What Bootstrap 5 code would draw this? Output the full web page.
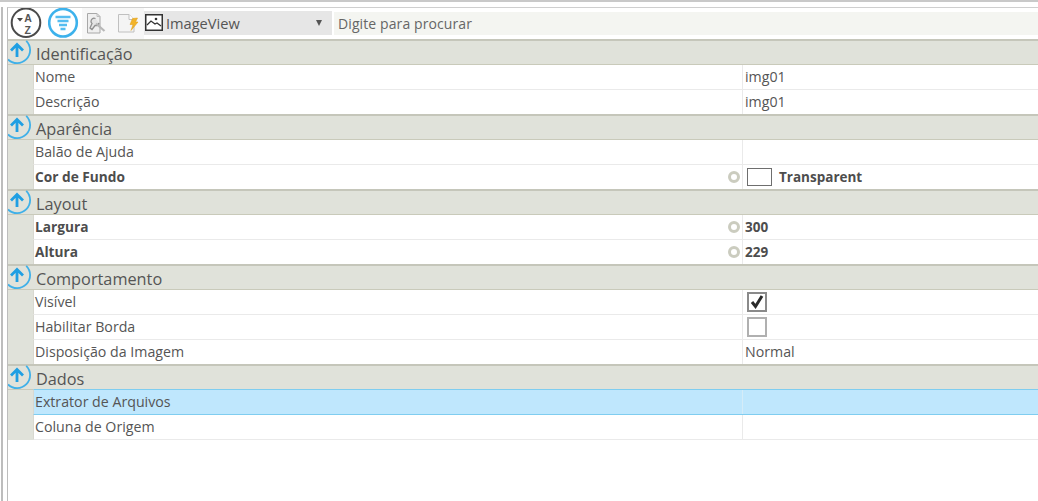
<!DOCTYPE html>
<html lang="pt">
<head>
<meta charset="utf-8">
<title>Propriedades</title>
<link href="https://cdn.jsdelivr.net/npm/bootstrap@5.3.0/dist/css/bootstrap.min.css" rel="stylesheet">
<style>
html,body{height:501px;overflow:hidden;background:#fff}
body{font-family:"Open Sans","Noto Sans",sans-serif;font-size:14.2px;color:#555}
.outer-frame{height:501px;padding-left:1px;border-top:2px solid #c9c9c9}
.inner-frame{height:499px;border-left:2px solid #bdbdbd;padding-left:4px}
.panel-frame{height:499px;border-left:1px solid #bdbdbd;margin-top:5px;border-top:1px solid #cfcfcf}
.tool-bar{height:31px;padding-left:2px}
.tool-ico{flex:none;display:block}
.tool-shade{width:62px;height:31px;margin-left:2px;background:#f7f7f7;flex:none}
.type-pick{width:188px;height:24px;background:#e6e6e6;color:#555;font-size:14.6px;padding-left:1px;margin-top:3px;flex:none}
.tp-name{margin-left:3px;line-height:24px}
.type-arrow{margin-left:auto;margin-right:10px;width:0;height:0;border-left:3.5px solid transparent;border-right:3.5px solid transparent;border-top:6px solid #555}
.find-box{height:23px;margin-left:2px;margin-top:4px;background:#f4f5f1;line-height:23px;padding-left:4px;color:#666;font-size:14px;letter-spacing:.1px}
.grp{position:relative}
.grp-head{height:26px;background:#e0e2da;border-top:2px solid #c5c6ba;border-bottom:1px solid #c9caba;padding-left:28px;font-size:16.3px;line-height:26px;color:#555}
.grp-ring{position:absolute;left:0;top:-1px}
.prop-row{height:25px;margin-left:25px;border-left:1px solid #d8d8d0;border-bottom:1px solid #eaeaea;background:#fff;line-height:24px}
.prop-row.row-end{height:24px;border-bottom:0}
.prop-name{width:708px;flex:none;padding-left:1px;position:relative}
.prop-val{flex:1;border-left:1px solid #eaeaea;padding-left:2px;display:flex;align-items:center;white-space:nowrap}
.gut{background:#e0e2da}
.is-bold{font-weight:700;font-size:13.7px;color:#4d4d4d}
.prop-val.is-bold{font-size:13.5px}
.prop-row.is-sel{background:#bfe7fd;border-top:1px solid #7fcdf0;border-bottom:1px solid #7fcdf0;margin-top:-1px;height:26px;position:relative}
.is-sel .prop-val{border-left-color:#d5ecf8}
.dot{position:absolute;right:2px;top:6px;width:12px;height:12px;border-radius:50%;border:3px solid #cbccbf;background:#fff}
.swatch{width:25px;height:18px;border:1px solid #6e6e6e;background:#fff;margin:0 7px 0 2px;display:block}
.chk{width:20px;height:20px;margin-left:2px;border:2px solid #b0b0b0;display:block;background:#fff;flex:none}
.chk-on{border-color:#8a8a8a}
.chk svg{display:block}
</style>
</head>
<body>
<div class="outer-frame">
<div class="inner-frame">
<div class="panel-frame">
  <div class="tool-bar d-flex">
    <svg class="tool-ico" width="34" height="31" viewBox="0 0 34 31"><circle cx="16" cy="14.700" r="14.300" fill="#fff" stroke="#4a4a4a" stroke-width="2"/><path d="M7 10h6l-3 3.500z" fill="#444"/><text x="14.300" y="13.500" font-family="Liberation Sans" font-size="10.500" font-weight="700" fill="#555">A</text><text x="14.500" y="25.500" font-family="Liberation Sans" font-size="10.500" font-weight="700" fill="#555">Z</text></svg>
    <svg class="tool-ico" width="32" height="31" viewBox="0 0 32 31" style="margin-left:4px"><circle cx="15" cy="14.700" r="13.800" fill="#fff" stroke="#3db2ec" stroke-width="2.600"/><path d="M7.500 9h15M9.500 13h11M11 17h8M12.500 21h5" stroke="#55bdf0" stroke-width="2.600"/></svg>
    <div class="tool-shade d-flex">
      <svg class="tool-ico" width="31" height="31" viewBox="0 0 31 31"><path d="M5.500 5.500h9.500l3 3v16.500H5.500z" fill="#efefef" stroke="#a8a8a8"/><path d="M15 5.500v3h3" fill="none" stroke="#bcbcbc"/><path d="M13.500 10.500c-2.500-1-4.500.5-4.500 3 0 1 .5 1.500 1 2l-2 4.500 2 1.500 3-4c2 .5 3.500-.5 4-2.500" fill="#e4e4e4" stroke="#8f8f8f" stroke-width="1.300"/><path d="M14 15.500l8.500 7.500" stroke="#b8b8b8" stroke-width="2.200"/></svg>
      <svg class="tool-ico" width="31" height="31" viewBox="0 0 31 31"><path d="M5.500 6.500h10.500l5 5v12.500H5.500z" fill="#f4f4f4" stroke="#c0c0c0"/><path d="M16 6.500v5h5" fill="#fff" stroke="#c0c0c0"/><path d="M19.500 10.500l5-.5-2 4h2.500l-7 8.500 2-6h-3z" fill="#f2b42a" stroke="#dc9a12" stroke-width=".5"/></svg>
    </div>
    <div class="type-pick d-flex align-items-center">
      <svg width="18" height="18" viewBox="0 0 18 18" style="flex:none"><rect x=".75" y=".75" width="16.500" height="15.500" fill="#fff" stroke="#333" stroke-width="1.500"/><path d="M2 11l4-4 4 3 2-1 4 3" fill="none" stroke="#333" stroke-width="1.300"/><circle cx="11" cy="5" r="1.300" fill="#333"/></svg>
      <span class="tp-name">ImageView</span>
      <i class="type-arrow"></i>
    </div>
    <div class="find-box flex-grow-1">Digite para procurar</div>
  </div>

  <section class="grp">
    <div class="gut">
      <div class="grp-head">Identificação</div>
      <div class="prop-row d-flex"><div class="prop-name">Nome</div><div class="prop-val">img01</div></div>
      <div class="prop-row row-end d-flex"><div class="prop-name">Descrição</div><div class="prop-val">img01</div></div>
    </div>
    <svg class="grp-ring" width="31" height="27" viewBox="0 0 31 27"><path d="M18.200 2.800A13 13 0 0 1 0 21.400" fill="none" stroke="#3fb0e8" stroke-width="1.800"/><path d="M9 19V6.500M3 12.500L9 6.500l6 6" fill="none" stroke="#1f9fe3" stroke-width="2.800"/></svg>
  </section>
  <section class="grp">
    <div class="gut">
      <div class="grp-head">Aparência</div>
      <div class="prop-row d-flex"><div class="prop-name">Balão de Ajuda</div><div class="prop-val"></div></div>
      <div class="prop-row row-end d-flex"><div class="prop-name is-bold">Cor de Fundo<i class="dot"></i></div><div class="prop-val is-bold"><i class="swatch"></i>Transparent</div></div>
    </div>
    <svg class="grp-ring" width="31" height="27" viewBox="0 0 31 27"><path d="M18.200 2.800A13 13 0 0 1 0 21.400" fill="none" stroke="#3fb0e8" stroke-width="1.800"/><path d="M9 19V6.500M3 12.500L9 6.500l6 6" fill="none" stroke="#1f9fe3" stroke-width="2.800"/></svg>
  </section>
  <section class="grp">
    <div class="gut">
      <div class="grp-head">Layout</div>
      <div class="prop-row d-flex"><div class="prop-name is-bold">Largura<i class="dot"></i></div><div class="prop-val is-bold">300</div></div>
      <div class="prop-row row-end d-flex"><div class="prop-name is-bold">Altura<i class="dot"></i></div><div class="prop-val is-bold">229</div></div>
    </div>
    <svg class="grp-ring" width="31" height="27" viewBox="0 0 31 27"><path d="M18.200 2.800A13 13 0 0 1 0 21.400" fill="none" stroke="#3fb0e8" stroke-width="1.800"/><path d="M9 19V6.500M3 12.500L9 6.500l6 6" fill="none" stroke="#1f9fe3" stroke-width="2.800"/></svg>
  </section>
  <section class="grp">
    <div class="gut">
      <div class="grp-head">Comportamento</div>
      <div class="prop-row d-flex"><div class="prop-name">Visível</div><div class="prop-val"><span class="chk chk-on"><svg width="16" height="16" viewBox="0 0 16 16"><path d="M3 8l3.500 4.500L13 2" fill="none" stroke="#2a2a2a" stroke-width="3"/></svg></span></div></div>
      <div class="prop-row d-flex"><div class="prop-name">Habilitar Borda</div><div class="prop-val"><span class="chk"></span></div></div>
      <div class="prop-row row-end d-flex"><div class="prop-name">Disposição da Imagem</div><div class="prop-val">Normal</div></div>
    </div>
    <svg class="grp-ring" width="31" height="27" viewBox="0 0 31 27"><path d="M18.200 2.800A13 13 0 0 1 0 21.400" fill="none" stroke="#3fb0e8" stroke-width="1.800"/><path d="M9 19V6.500M3 12.500L9 6.500l6 6" fill="none" stroke="#1f9fe3" stroke-width="2.800"/></svg>
  </section>
  <section class="grp">
    <div class="gut">
      <div class="grp-head">Dados</div>
      <div class="prop-row d-flex is-sel"><div class="prop-name">Extrator de Arquivos</div><div class="prop-val"></div></div>
      <div class="prop-row d-flex"><div class="prop-name">Coluna de Origem</div><div class="prop-val"></div></div>
    </div>
    <svg class="grp-ring" width="31" height="27" viewBox="0 0 31 27"><path d="M18.200 2.800A13 13 0 0 1 0 21.400" fill="none" stroke="#3fb0e8" stroke-width="1.800"/><path d="M9 19V6.500M3 12.500L9 6.500l6 6" fill="none" stroke="#1f9fe3" stroke-width="2.800"/></svg>
  </section>
</div>
</div>
</div>
</body>
</html>
